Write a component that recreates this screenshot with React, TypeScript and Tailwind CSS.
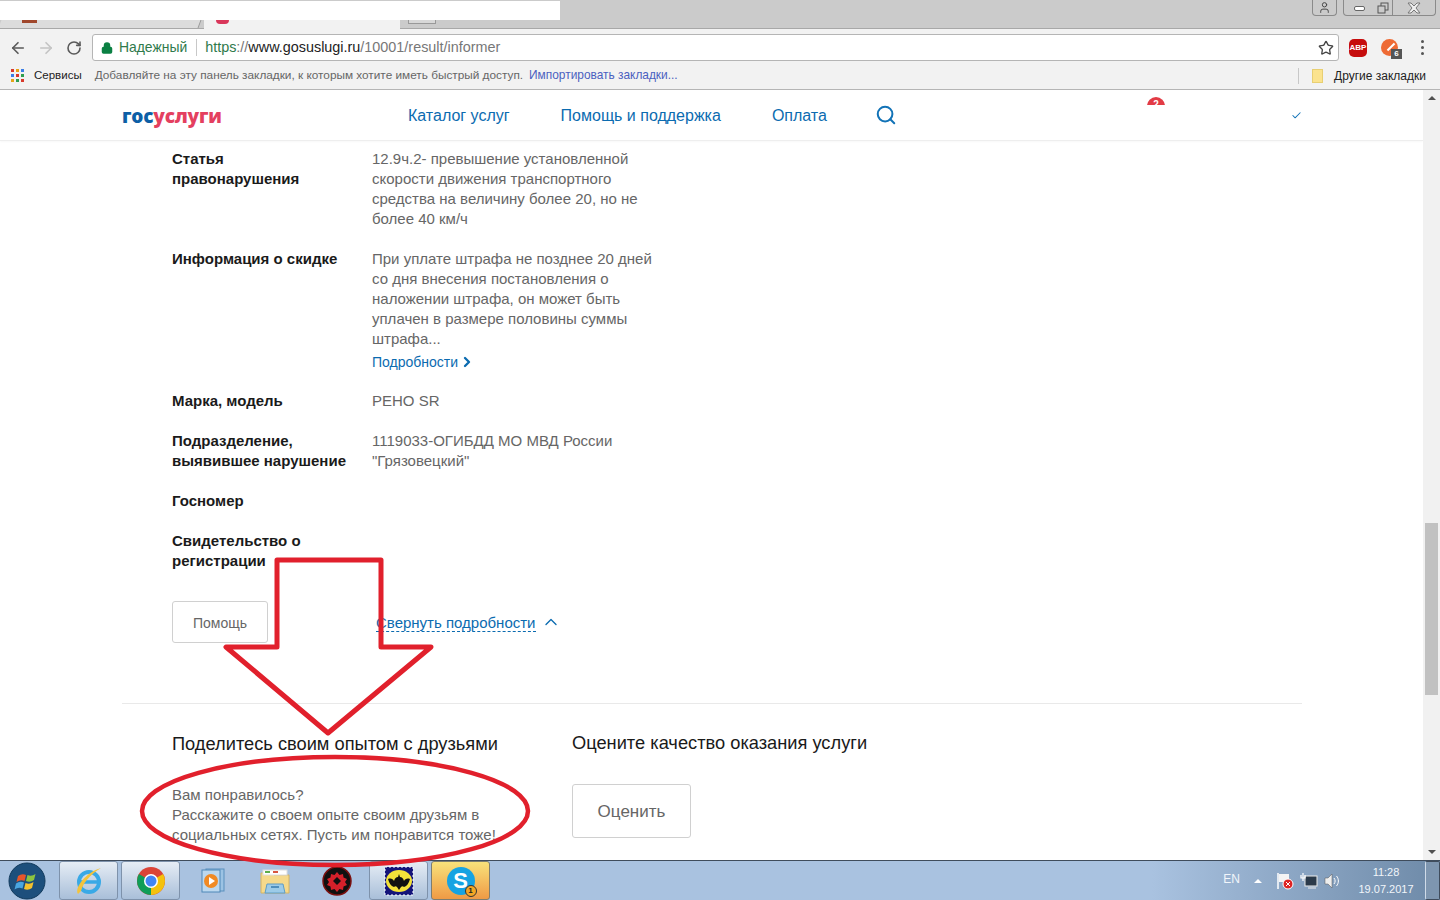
import React from "react";
import { ArrowLeft, ArrowRight, RotateCw, Star, Lock, Search, ChevronRight, ChevronUp, Check, User } from "lucide-react";

const Row = ({ label, children }: { label: React.ReactNode; children?: React.ReactNode }) => (
  <div className="flex mb-5">
    <div className="w-[200px] shrink-0 pr-2 font-bold text-[#1a1a1a] text-[15px] leading-5">{label}</div>
    <div className="w-[290px] text-[#666] text-[15px] leading-5">{children}</div>
  </div>
);

const TaskBtn = ({ children, active }: { children: React.ReactNode; active?: "light" | "orange" }) => (
  <div
    className={
      "w-[59px] h-[39px] flex items-center justify-center rounded-[3px] border " +
      (active === "orange"
        ? "border-[#7d7d70] bg-gradient-to-b from-[#f8e27a] to-[#ee9a45]"
        : active === "light"
        ? "border-[#7e92ab] bg-gradient-to-b from-[#e6edf5] to-[#a9bfd9]"
        : "border-transparent")
    }
  >
    {children}
  </div>
);

export default function App() {
  return (
    <div className="relative w-[1440px] h-[900px] overflow-hidden flex flex-col bg-white font-['Liberation_Sans',sans-serif]">
      {/* tab strip */}
      <div className="relative h-[29px] shrink-0 bg-[#cbcbcb] border-b border-[#a8a8a8]">
        <div className="absolute left-0 top-[20px] w-[200px] h-[8px] bg-[#dcdcdc] border-r border-[#999] skew-x-[-20deg]" />
        <div className="absolute left-[22px] top-[20px] w-[15px] h-[3px] bg-[#a0472c]" />
        <div className="absolute left-[204px] top-[20px] w-[196px] h-[9px] bg-[#f2f2f2]" />
        <div className="absolute left-[216px] top-[20px] w-[13px] h-[4px] rounded-b-full bg-[#d9375a]" />
        <div className="absolute left-[408px] top-[20px] w-[28px] h-[4px] bg-[#d8d8d8] border border-t-0 border-[#999]" />
        <div className="absolute left-0 top-[1px] w-[560px] h-[19px] bg-white" />
        <div className="absolute right-[4px] top-0 flex gap-[6px]">
          <div className="w-[25px] h-[16px] flex items-center justify-center border border-t-0 border-[#8a8a8a] rounded-b-[4px]">
            <User size={13} strokeWidth={1.8} className="text-[#444]" />
          </div>
          <div className="flex h-[16px] border border-t-0 border-[#8a8a8a] rounded-b-[4px]">
            <div className="w-[30px] flex items-center justify-center">
              <div className="w-[11px] h-[5px] mt-[2px] border border-[#666] rounded-[2px] bg-white" />
            </div>
            <div className="w-[19px] flex items-center justify-center border-r border-[#8a8a8a]">
              <svg width="12" height="12" viewBox="0 0 12 12">
                <rect x="4" y="1" width="7" height="7" fill="none" stroke="#555" />
                <rect x="1" y="4" width="7" height="7" fill="#cbcbcb" stroke="#555" />
              </svg>
            </div>
            <div className="w-[42px] flex items-center justify-center">
              <svg width="14" height="12" viewBox="0 0 14 12">
                <path d="M1 1h3l3 3 3-3h3l-4 5 4 5h-3l-3-3-3 3H1l4-5z" fill="#eee" stroke="#777" />
              </svg>
            </div>
          </div>
        </div>
      </div>

      {/* toolbar */}
      <div className="h-[33px] shrink-0 bg-[#f2f2f2] flex items-center pt-[4px] pl-[9px] pr-[11px]">
        <ArrowLeft size={18} strokeWidth={2.2} className="text-[#5a5a5a]" />
        <ArrowRight size={18} strokeWidth={2.2} className="text-[#c4c4c4] ml-[10px]" />
        <RotateCw size={16} strokeWidth={2.4} className="text-[#5a5a5a] ml-[11px]" />
        <div className="ml-[10px] w-[1247px] h-[27px] bg-white border border-[#b5b5b5] rounded-[3px] flex items-center pl-[8px] pr-[4px]">
          <Lock size={12} strokeWidth={3} className="text-[#0b8043]" fill="#0b8043" />
          <span className="ml-[6px] text-[13.9px] text-[#2f7a4b]">Надежный</span>
          <div className="ml-[9px] w-px h-[17px] bg-[#c8c8c8]" />
          <span className="ml-[8px] text-[14.4px] text-[#777] whitespace-nowrap">
            <span className="text-[#2f7a4b]">https</span>://<span className="text-[#222]">www.gosuslugi.ru</span>/10001/result/informer
          </span>
          <Star size={16} strokeWidth={2} className="ml-auto text-[#444]" />
        </div>
        <div className="ml-[10px] w-[18px] h-[18px] bg-[#c60d0d] rounded-[5px] flex items-center justify-center text-white text-[8px] font-bold leading-none">ABP</div>
        <div className="relative ml-[14px] w-[17px] h-[17px] rounded-full bg-[#ee6b35]">
          <div className="absolute left-[5px] top-[7px] w-[10px] h-[2px] bg-white -rotate-45" />
          <div className="absolute left-[10px] top-[10px] w-[11px] h-[10px] bg-[#555] text-white text-[8px] leading-[10px] text-center font-bold">6</div>
        </div>
        <div className="ml-[23px] flex flex-col gap-[3px]">
          <div className="w-[3px] h-[3px] rounded-full bg-[#555]" />
          <div className="w-[3px] h-[3px] rounded-full bg-[#555]" />
          <div className="w-[3px] h-[3px] rounded-full bg-[#555]" />
        </div>
      </div>

      {/* bookmarks */}
      <div className="h-[28px] shrink-0 bg-[#f2f2f2] border-b border-[#b5b5b5] flex items-center pl-[11px] pr-[14px] text-[12px]">
        <svg width="13" height="13" viewBox="0 0 13 13">
          {[
            [0, 0, "#d8392b"], [5, 0, "#e7a318"], [10, 0, "#3a7ee6"],
            [0, 5, "#3a7ee6"], [5, 5, "#d8392b"], [10, 5, "#2f9e4f"],
            [0, 10, "#e7a318"], [5, 10, "#2f9e4f"], [10, 10, "#d8392b"],
          ].map(([x, y, c], i) => (
            <rect key={i} x={x as number} y={y as number} width="3" height="3" fill={c as string} />
          ))}
        </svg>
        <span className="ml-[10px] text-[#222] text-[11.5px]">Сервисы</span>
        <span className="ml-[13px] text-[#666] text-[11.8px]">Добавляйте на эту панель закладки, к которым хотите иметь быстрый доступ.</span>
        <span className="ml-[6px] text-[#4a5fc0] text-[11.9px]">Импортировать закладки...</span>
        <div className="ml-auto w-px h-[16px] bg-[#c8c8c8]" />
        <div className="ml-[13px] w-[11px] h-[14px] bg-[#fbe38e] border border-[#e8cf72]" />
        <span className="ml-[11px] text-[#222]">Другие закладки</span>
      </div>

      {/* page */}
      <div className="flex flex-1 min-h-0">
        <div className="flex-1 min-w-0 overflow-hidden">
          <header className="h-[51px] border-b border-[#eeeeee] flex items-center pl-[122px] relative shadow-[0_1px_2px_rgba(0,0,0,0.03)]">
            <div className="w-[286px] font-['Open_Sans',sans-serif] font-extrabold text-[19px] leading-none tracking-[-0.2px] pt-[2px]">
              <span className="text-[#0d5fa6]">гос</span><span className="text-[#e4405f]">услуги</span>
            </div>
            <nav className="flex items-center gap-[51px] text-[16px] text-[#0b6bb0] pt-[1px]">
              <span>Каталог услуг</span>
              <span>Помощь и поддержка</span>
              <span>Оплата</span>
              <Search size={22} strokeWidth={2.2} className="text-[#1273b7] -ml-[3px] -mt-[1px]" />
            </nav>
            <div className="absolute left-[1147px] top-[7px] w-[18px] h-[8px] overflow-hidden">
              <div className="w-[18px] h-[18px] rounded-full bg-[#e23b45] text-white text-[10px] font-bold text-center leading-[16px]">2</div>
            </div>
            <Check size={11} strokeWidth={2.2} className="absolute left-[1291px] top-[20px] text-[#1273b7]" />
          </header>

          <div className="pl-[172px] pt-[8px]">
            <Row label={<>Статья<br />правонарушения</>}>
              12.9ч.2- превышение установленной скорости движения транспортного средства на величину более 20, но не более 40 км/ч
            </Row>
            <div className="flex mb-[19px]">
              <div className="w-[200px] shrink-0 font-bold text-[#1a1a1a] text-[15px] leading-5">Информация о скидке</div>
              <div className="w-[290px] text-[#666] text-[15px] leading-5">
                При уплате штрафа не позднее 20 дней со дня внесения постановления о наложении штрафа, он может быть уплачен в размере половины суммы штрафа...
                <div className="mt-[3px] flex items-center text-[14px] text-[#0b6bb0]">
                  Подробности <ChevronRight size={16} strokeWidth={3.5} className="ml-[1px]" />
                </div>
              </div>
            </div>
            <Row label="Марка, модель">РЕНО SR</Row>
            <Row label={<>Подразделение,<br />выявившее нарушение</>}>
              1119033-ОГИБДД МО МВД России "Грязовецкий"
            </Row>
            <Row label="Госномер" />
            <Row label={<>Свидетельство о<br />регистрации</>} />
            <div className="flex items-center mt-[30px]">
              <div className="w-[96px] h-[42px] pt-[2px] border border-[#d0d0d0] rounded-[3px] flex items-center justify-center text-[14px] text-[#666]">Помощь</div>
              <div className="ml-[108px] mt-[2px] text-[15px] text-[#0b6bb0] border-b border-dashed border-[#0b6bb0] leading-[17px]">Свернуть подробности</div>
              <ChevronUp size={20} strokeWidth={1.6} className="ml-[5px] text-[#0b6bb0]" />
            </div>
          </div>

          <div className="ml-[122px] w-[1180px] h-px bg-[#e9e9e9] mt-[60px]" />

          <div className="pl-[172px] flex pt-[29px]">
            <div className="w-[400px]">
              <div className="text-[18.25px] leading-[22px] text-[#1a1a1a]">Поделитесь своим опытом с друзьями</div>
              <div className="mt-[30px] text-[15px] leading-5 text-[#666]">
                Вам понравилось?<br />
                Расскажите о своем опыте своим друзьям в<br />
                социальных сетях. Пусть им понравится тоже!
              </div>
            </div>
            <div>
              <div className="text-[18.25px] leading-[22px] text-[#1a1a1a] -mt-px">Оцените качество оказания услуги</div>
              <div className="mt-[30px] w-[119px] h-[54px] pt-[2px] border border-[#d0d0d0] rounded-[3px] flex items-center justify-center text-[17px] text-[#666]">Оценить</div>
            </div>
          </div>
        </div>

        {/* scrollbar */}
        <div className="relative w-[17px] shrink-0 bg-[#f1f1f1]">
          <div className="absolute left-[5px] top-[6px] w-0 h-0 border-x-[4px] border-x-transparent border-b-[4px] border-b-[#505050]" />
          <div className="absolute left-[2px] top-[433px] w-[13px] h-[172px] bg-[#c1c1c1]" />
          <div className="absolute left-[5px] bottom-[6px] w-0 h-0 border-x-[4px] border-x-transparent border-t-[4px] border-t-[#505050]" />
        </div>
      </div>

      {/* taskbar */}
      <div className="h-[40px] shrink-0 flex items-center bg-gradient-to-r from-[#a9c2e0] via-[#a9c2e0] via-80% to-[#6e8aa8] border-t border-[#3f4c5c] pl-[6px]">
        <svg width="42" height="38" viewBox="0 0 42 38" className="mr-[11px] shrink-0">
          <circle cx="21" cy="19" r="18" fill="#1d4f7c" stroke="#123a5c" />
          <path d="M12 14q4-3 8-1l-1.500 6q-4-2-8 1z" fill="#e8562a" />
          <path d="M21.500 13q4 2 8-1l-1.500 6q-4 3-8 1z" fill="#8cc43f" />
          <path d="M10 21.500q4-3 8-1l-1.500 6q-4-2-8 1z" fill="#4aa6e0" />
          <path d="M19.500 21q4 2 8-1l-1.500 6q-4 3-8 1z" fill="#f6c22d" />
        </svg>
        <div className="flex gap-[3px]">
          <TaskBtn active="light">
            <svg width="34" height="34" viewBox="0 0 34 34">
              <ellipse cx="17" cy="18" rx="10" ry="10" fill="none" stroke="#39a9e6" strokeWidth="4" />
              <path d="M8 18h18" stroke="#39a9e6" strokeWidth="3.5" />
              <path d="M6 30C2 24 14 8 29 4c-7 4-17 12-20 23z" fill="#f3c33c" />
            </svg>
          </TaskBtn>
          <TaskBtn active="light">
            <svg width="30" height="30" viewBox="0 0 30 30">
              <circle cx="15" cy="15" r="14" fill="#db4437" />
              <path d="M15 15 L27.100 8 A14 14 0 0 1 15 29Z" fill="#f4c20d" />
              <path d="M15 15 L15 29 A14 14 0 0 1 2.900 8Z" fill="#0f9d58" />
              <circle cx="15" cy="15" r="7" fill="#fff" />
              <circle cx="15" cy="15" r="5.500" fill="#4285f4" />
            </svg>
          </TaskBtn>
          <TaskBtn>
            <svg width="30" height="30" viewBox="0 0 30 30">
              <rect x="8" y="3" width="18" height="22" fill="#9cc3e4" stroke="#5a8fbd" />
              <rect x="4" y="4" width="18" height="22" fill="#bcd8ef" stroke="#4f88b8" />
              <circle cx="13" cy="15" r="7" fill="#f08a24" />
              <path d="M11 11l6 4-6 4z" fill="#fff" />
            </svg>
          </TaskBtn>
          <TaskBtn>
            <svg width="32" height="32" viewBox="0 0 32 32">
              <path d="M2 8h11l2 2h15v18H2z" fill="#f5d98b" stroke="#d4b465" />
              <rect x="4" y="5" width="24" height="5" fill="#fff" stroke="#ddd" />
              <rect x="6" y="6" width="5" height="2" fill="#5cae4a" />
              <rect x="14" y="6" width="5" height="2" fill="#d8563f" />
              <path d="M8 19h16l2 9H6z" fill="#9ccbe8" stroke="#5e9cc4" />
              <rect x="12" y="21" width="8" height="2" fill="#4f8fbd" />
            </svg>
          </TaskBtn>
          <TaskBtn>
            <svg width="30" height="30" viewBox="0 0 30 30">
              <circle cx="15" cy="15" r="14" fill="#101010" stroke="#7a1010" strokeWidth="1.500" />
              <path d="M15 6l2.500 3 3.500-1 .5 3.500 3.500 1.500-2 3 2 3-3.500 1.500-.5 3.500-3.500-1-2.500 3-2.500-3-3.500 1-.5-3.500-3.500-1.500 2-3-2-3 3.500-1.500.5-3.500 3.500 1z" fill="#d5202a" />
              <path d="M11 15l4-4 4 4-4 4z" fill="#101010" />
            </svg>
          </TaskBtn>
          <TaskBtn active="light">
            <svg width="30" height="30" viewBox="0 0 30 30">
              <rect x="1" y="1" width="28" height="28" fill="#14147a" stroke="#fff" strokeDasharray="2 2" />
              <ellipse cx="15" cy="15" rx="13" ry="11" fill="#f4e23a" />
              <path d="M4 13c3-1 5 0 6 2 1-3 2-4 4-4l1-3 1 3c2 0 3 1 4 4 1-2 3-3 6-2-1 4-3 7-6 8-1-1-2-1-3 0l-2 3-2-3c-1-1-2-1-3 0-3-1-5-4-6-8z" fill="#111" />
            </svg>
          </TaskBtn>
          <TaskBtn active="orange">
            <div className="relative w-[28px] h-[28px] rounded-full bg-[#16a3e2] flex items-center justify-center text-white font-bold text-[22px] leading-none">
              S
              <div className="absolute -right-[2px] -bottom-[2px] w-[12px] h-[12px] rounded-full bg-[#f5a623] border border-[#333] text-[#222] text-[8px] leading-[10px] text-center">1</div>
            </div>
          </TaskBtn>
        </div>
        <div className="ml-auto flex items-center text-[#f1f5fa]">
          <span className="text-[12px] mr-[14px] mb-[4px]">EN</span>
          <div className="w-0 h-0 border-x-[4px] border-x-transparent border-b-[4px] border-b-white mr-[14px]" />
          <svg width="18" height="18" viewBox="0 0 18 18" className="mr-[6px]">
            <path d="M2 1v16" stroke="#fff" strokeWidth="1.500" />
            <path d="M3 2h10v8H3z" fill="#f4f4f4" />
            <circle cx="12" cy="12" r="5" fill="#d22" stroke="#fff" />
            <path d="M10 10l4 4M14 10l-4 4" stroke="#fff" />
          </svg>
          <svg width="18" height="18" viewBox="0 0 18 18" className="mr-[6px]">
            <rect x="5" y="4" width="12" height="10" fill="#2b3a4a" stroke="#eee" />
            <path d="M3 1v8M1 3v3h4V3" fill="none" stroke="#fff" strokeWidth="1.200" />
            <path d="M8 16h8" stroke="#eee" />
          </svg>
          <svg width="16" height="18" viewBox="0 0 16 18" className="mr-[13px]">
            <path d="M1 6h3l4-4v14l-4-4H1z" fill="#eee" stroke="#555" strokeWidth="0.500" />
            <path d="M10 6c1.500 2 1.500 4 0 6M12.500 4c2.500 3 2.500 7 0 10" fill="none" stroke="#fff" />
          </svg>
          <div className="w-[66px] text-center text-[11px] leading-[17px] mr-[6px]">
            <div>11:28</div>
            <div>19.07.2017</div>
          </div>
          <div className="w-[15px] h-[39px] border border-[#3f4c5c] border-l-[#d0dbe8] rounded-[2px] bg-[#7e96b0]" />
        </div>
      </div>

      {/* annotations */}
      <svg className="absolute left-0 top-0 pointer-events-none" width="1440" height="900">
        <polygon points="277,560 381,560 381,647 431,647 328,733 226,647 277,647" fill="none" stroke="#e1202c" strokeWidth="5" strokeLinejoin="round" />
        <ellipse cx="335" cy="811" rx="193" ry="54" fill="none" stroke="#e1202c" strokeWidth="4.500" />
      </svg>
    </div>
  );
}
